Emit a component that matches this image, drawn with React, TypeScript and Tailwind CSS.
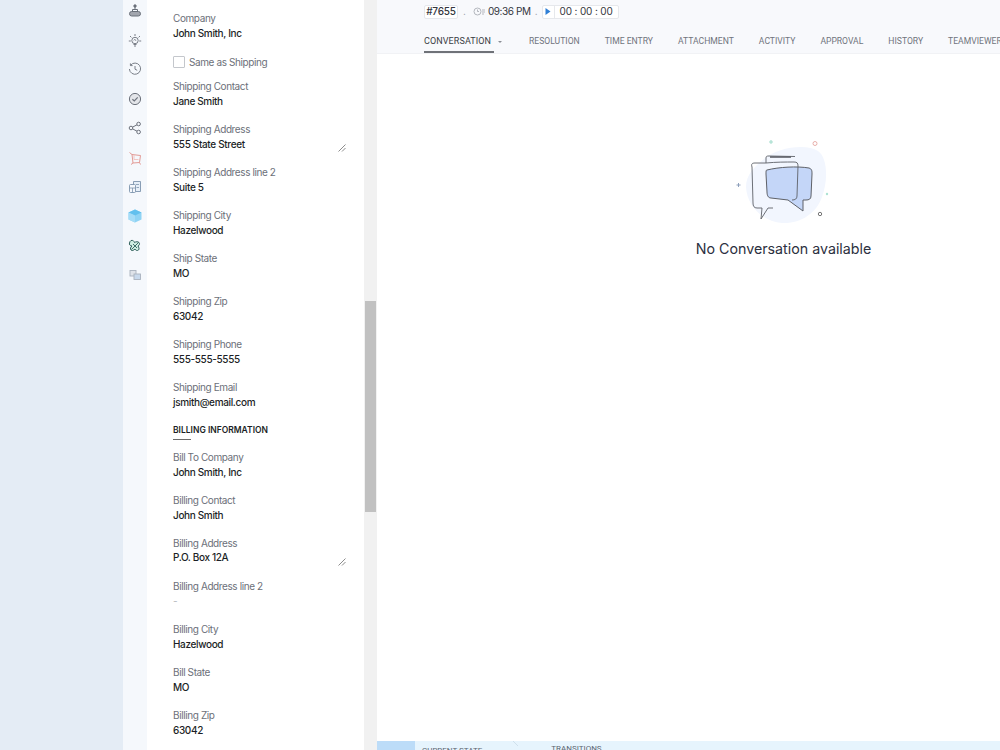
const fieldsTop = [
  { label: "Shipping Contact", value: "Jane Smith" },
  { label: "Shipping Address", value: "555 State Street", area: true },
  { label: "Shipping Address line 2", value: "Suite 5" },
  { label: "Shipping City", value: "Hazelwood" },
  { label: "Ship State", value: "MO" },
  { label: "Shipping Zip", value: "63042" },
  { label: "Shipping Phone", value: "555-555-5555" },
  { label: "Shipping Email", value: "jsmith@email.com" },
]

const fieldsBilling = [
  { label: "Bill To Company", value: "John Smith, Inc" },
  { label: "Billing Contact", value: "John Smith" },
  { label: "Billing Address", value: "P.O. Box 12A", area: true, tight: true },
  { label: "Billing Address line 2", value: "-", empty: true },
  { label: "Billing City", value: "Hazelwood" },
  { label: "Bill State", value: "MO" },
  { label: "Billing Zip", value: "63042" },
]

const tabs = ["Resolution", "Time Entry", "Attachment", "Activity", "Approval", "History", "Teamviewer"]

type FieldProps = { label: string; value: string; area?: boolean; empty?: boolean; tight?: boolean }

function Field({ label, value, area, empty, tight }: FieldProps) {
  return (
    <div className="h-[43px]">
      <div className="h-[15px] text-[10px] leading-[15px] tracking-[-0.4px] text-[#6c7079]">{label}</div>
      <div className="flex w-[173px] items-start justify-between">
        <div className={`text-[10px] leading-[15px] tracking-[-0.35px] ${empty ? "text-[#b5b8bd]" : "font-medium text-[#1c1f26]"} ${tight ? "-mt-px" : ""}`}>
          {value}
        </div>
        {area && (
          <svg width="8" height="8" viewBox="0 0 8 8" className="mt-[7px]" stroke="#6f6f6f" strokeWidth="0.8">
            <path d="M0.5 7.5 L7.5 0.5 M4 7.5 L7.5 4" />
          </svg>
        )}
      </div>
    </div>
  )
}

function Rail() {
  const cls = "h-[14px] w-[14px]"
  return (
    <div className="flex w-6 shrink-0 flex-col items-center bg-[#f5f8fc]">
      <div className="-mt-[4px] flex flex-col items-center">
        <div className="flex h-[29.4px] items-center">
          <svg viewBox="0 0 14 14" className={cls} fill="none" stroke="#6a707a" strokeWidth="1">
            <path d="M7 1v4" />
            <circle cx="7" cy="2" r="1.2" fill="#6a707a" />
            <path d="M4.5 5.5h5v2h-5z" />
            <rect x="1.5" y="7.5" width="11" height="4.5" rx="2.2" fill="#a2a6ae" />
          </svg>
        </div>
        <div className="flex h-[29.4px] items-center">
          <svg viewBox="0 0 14 14" className={cls} fill="none" stroke="#7a7f88" strokeWidth="1">
            <circle cx="7" cy="7.5" r="3.2" />
            <path d="M7 1v2M2 3l1.4 1.4M12 3l-1.4 1.4M.8 8h2M11.2 8h2M5.5 11.5h3M6 13h2" />
            <path d="M5.6 7.5 7 6.2l1 1.8" strokeWidth="0.8" />
          </svg>
        </div>
        <div className="flex h-[29.4px] items-center">
          <svg viewBox="0 0 14 14" className={cls} fill="none" stroke="#7a7f88" strokeWidth="1">
            <path d="M2.6 3.2A5.6 5.6 0 1 1 1.4 7" />
            <path d="M2.4 1.4v2.2h2.2M7 4v3.2l2.2 1.1" />
          </svg>
        </div>
        <div className="flex h-[29.4px] items-center">
          <svg viewBox="0 0 14 14" className={cls} fill="none" stroke="#6d727c" strokeWidth="1">
            <circle cx="7" cy="7" r="5.6" fill="#e3e5e9" />
            <path d="m4.4 7.2 1.9 1.8 3.4-3.6" strokeWidth="1.2" />
          </svg>
        </div>
        <div className="flex h-[29.4px] items-center">
          <svg viewBox="0 0 14 14" className={cls} fill="none" stroke="#6d727c" strokeWidth="1">
            <circle cx="3" cy="7" r="1.8" />
            <circle cx="10.6" cy="3" r="1.8" />
            <circle cx="10.6" cy="11" r="1.8" />
            <path d="m4.6 6.1 4.4-2.3M4.6 7.9l4.4 2.3" />
          </svg>
        </div>
        <div className="flex h-[29.4px] items-center">
          <svg viewBox="0 0 14 14" className={cls} fill="none" stroke="#e0908a" strokeWidth="0.9">
            <path d="M1.5 1.5 4 3.5l8.5 1-1 7-6.5.5-1-8.5" />
            <path d="M5 12 3 13.5M11.5 11.5l1 2" />
            <path d="M6 4v4.5h4.5" stroke="#f2c0bc" />
          </svg>
        </div>
        <div className="flex h-[29.4px] items-center">
          <svg viewBox="0 0 14 14" className={cls} fill="none" stroke="#7d94ad" strokeWidth="0.9">
            <path d="M5.5 4.5V1.5h7v10h-7" fill="#e6eff8" />
            <rect x="1.5" y="4.5" width="6" height="8" rx="1" fill="#f5f8fc" />
            <path d="M1.5 8h6M4.5 8v4.5M8 4.5h3M8.5 7.5h2.5" strokeWidth="0.8" />
          </svg>
        </div>
        <div className="flex h-[29.4px] items-center">
          <svg viewBox="0 0 14 14" className={cls}>
            <path d="M7 .5 13.5 3.4v7.2L7 13.5.5 10.6V3.4z" fill="#8fd3f4" />
            <path d="M7 .5 13.5 3.4 7 6.4.5 3.4z" fill="#62c0ee" />
            <path d="M7 6.4v7.1L.5 10.6V3.4z" fill="#a5dcf7" />
          </svg>
        </div>
        <div className="flex h-[29.4px] items-center">
          <svg viewBox="0 0 14 14" className={cls} fill="none" stroke="#2f5f5a" strokeWidth="1">
            <path d="M3 1.5c2-.5 3 .5 3.5 2 1.5-1 3.5-1 4.5 0 1 1 .5 3-1 3.5 1 1.5 1.5 3 .5 4-1 1-3 .5-3.5-1-1.5 1.5-3 2-4 1-1-1-.5-3 1-4C2 7 1 5.5 1.5 4c.2-1 .7-2 1.5-2.5z" fill="#cfeee2" />
            <path d="M3.5 10.5 10.5 3.5M5 5l4 4" strokeWidth="0.9" />
          </svg>
        </div>
        <div className="flex h-[29.4px] items-center">
          <svg viewBox="0 0 14 14" className={cls} fill="none" stroke="#aab2be" strokeWidth="0.9">
            <rect x="2" y="2.5" width="6" height="5.5" fill="#dfe3e9" />
            <rect x="6" y="6" width="6.5" height="5.5" fill="#c8d9ec" />
          </svg>
        </div>
      </div>
    </div>
  )
}

function FormPanel() {
  return (
    <div className="w-[217px] shrink-0 overflow-hidden bg-white pl-[26px] pt-[11px]">
      <div className="h-[15px] text-[10px] leading-[15px] tracking-[-0.4px] text-[#6c7079]">Company</div>
      <div className="h-[15px] text-[10px] font-medium leading-[15px] tracking-[-0.35px] text-[#1c1f26]">John Smith, Inc</div>
      <div className="flex h-[38px] items-center gap-[4px] pt-[4px]">
        <div className="h-3 w-3 rounded-[1px] border border-[#c4c7cc] bg-white" />
        <span className="text-[10px] tracking-[-0.4px] text-[#6c7079]">Same as Shipping</span>
      </div>
      {fieldsTop.map((f) => (
        <Field key={f.label} {...f} />
      ))}
      <div className="text-[8.5px] font-semibold leading-[15px] text-[#1c1f26]">BILLING INFORMATION</div>
      <div className="mt-[1px] h-px w-[18px] bg-[#6a6a6a]" />
      <div className="h-[10px]" />
      {fieldsBilling.map((f) => (
        <Field key={f.label} {...f} />
      ))}
    </div>
  )
}

function Illustration() {
  return (
    <svg width="100" height="90" viewBox="0 0 100 90" fill="none">
      <path d="M30 24C42 13 72 8 84 16c10 7 10 30 4 46-6 17-22 27-40 26C30 87 13 72 12 52c0-12 8-20 18-28z" fill="#f2f6fe" />
      <path d="M33 35c12-3 30-4 42-2 3 1 3 3 3 6l-1 22c0 3-2 4-5 4h-3v11L54 65 37 63c-3 0-4-3-4-6l-1-18c0-3 0-4 1-4z" fill="#c4d6f8" stroke="#5e6168" strokeWidth="1" />
      <path d="M32 28V23c0-2 1-2 3-2l26 .5" stroke="#5e6168" strokeWidth="0.9" />
      <path d="M36 22h21" stroke="#5e6168" strokeWidth="1.6" />
      <path d="M32 28H21c-3 0-4 1-3 4l1 36c0 3 1 5 4 5h5l-1 11 7-11h5" stroke="#5e6168" strokeWidth="0.9" />
      <path d="M32 28c10-1 20-1 28-1 3 0 4 1 4 4l-1 30c0 3-2 4-5 4" stroke="#5e6168" strokeWidth="0.9" />
      <circle cx="37" cy="7" r="1.4" fill="#bfe8dc" stroke="#9ed8c8" strokeWidth="0.5" />
      <circle cx="81" cy="8.5" r="2" stroke="#e7a8a3" strokeWidth="0.9" />
      <path d="M2.5 50h4M4.5 48v4" stroke="#8597b5" strokeWidth="0.9" />
      <circle cx="93" cy="59" r="1.2" fill="#aee3d3" />
      <circle cx="86" cy="79" r="1.7" stroke="#666" strokeWidth="0.9" />
    </svg>
  )
}

function TopBar() {
  return (
    <div className="h-[54px] shrink-0 border-b border-[#f1f2f5] bg-[#f8f9fc] pl-[47px]">
      <div className="flex h-[23px] items-center text-[10px] text-[#33363d]">
        <div className="flex h-[14px] w-[34px] items-center justify-center rounded-[2px] border border-[#e6e8ec] bg-white font-medium tracking-[-0.2px]">#7655</div>
        <span className="mx-[5px] text-[#9a9ea6]">.</span>
        <svg width="13" height="9" viewBox="0 0 13 9" fill="none" stroke="#a3a7ae" strokeWidth="0.8" className="ml-[2px]">
          <circle cx="4.5" cy="4.5" r="3.5" />
          <path d="M4.5 2.5v2h1.5M9 3h3M9 5h3M9 7h2" />
        </svg>
        <span className="ml-[2px] tracking-[-0.4px]">09:36 PM</span>
        <span className="mx-[4px] text-[#9a9ea6]">.</span>
        <div className="flex h-[14px] w-[77px] items-stretch rounded-[2px] border border-[#e6e8ec] bg-white">
          <div className="flex w-[12px] items-center justify-center border-r border-[#e6e8ec]">
            <svg width="6" height="7" viewBox="0 0 6 7"><path d="M.5 0 5.5 3.5.5 7z" fill="#2f7fd6" /></svg>
          </div>
          <div className="flex flex-1 items-center justify-center text-[10px] tracking-[-0.15px]">00 : 00 : 00</div>
        </div>
      </div>
      <div className="flex h-[30px] items-stretch gap-[25px]" style={{ fontFamily: "Roboto, sans-serif" }}>
        <div className="flex w-[70px] items-center gap-[5px] border-b-2 border-[#6f7278] pt-[9px] text-[9px] tracking-[0.1px] uppercase text-[#3a3d44]">
          Conversation
          <span className="ml-[2px] h-0 w-0 border-x-[2px] border-t-[2px] border-x-transparent border-t-[#8a8d94]" />
        </div>
        <div className="ml-[10px] flex gap-[25px] pt-[12px] text-[8.6px] leading-[12px] whitespace-nowrap uppercase text-[#70747c]">
          {tabs.map((t) => (
            <span key={t}>{t}</span>
          ))}
        </div>
      </div>
    </div>
  )
}

export default function App() {
  return (
    <div className="flex h-[750px] w-[1000px] overflow-hidden bg-[#e4ecf5]" style={{ fontFamily: "Inter, sans-serif" }}>
      <div className="w-[123px] shrink-0" />
      <Rail />
      <FormPanel />
      <div className="w-[13px] shrink-0 bg-[#f1f1f1] px-px">
        <div className="mt-[301px] h-[211px] bg-[#c1c1c1]" />
      </div>
      <div className="flex w-[813px] shrink-0 flex-col bg-white">
        <TopBar />
        <div className="flex flex-1 flex-col items-center pt-[81px]">
          <Illustration />
          <div className="mt-[14px] text-[14.25px] leading-[20px] text-[#2c3040]">No Conversation available</div>
        </div>
        <div className="flex h-[9px] shrink-0 overflow-hidden bg-[#e6f4fd] text-[8px] uppercase leading-[10px] text-[#5b6470]" style={{ fontFamily: "Roboto, sans-serif" }}>
          <div className="h-full w-[38px] bg-[#bcdcf8]" />
          <span className="ml-[7px] mt-[5px]">Current State</span>
          <svg width="8" height="9" viewBox="0 0 8 9" fill="none" stroke="#cfe0ec" strokeWidth="1" className="ml-[30px]"><path d="M1 0 6 5" /></svg>
          <span className="ml-[31px] mt-[3px]">Transitions</span>
        </div>
      </div>
    </div>
  )
}
